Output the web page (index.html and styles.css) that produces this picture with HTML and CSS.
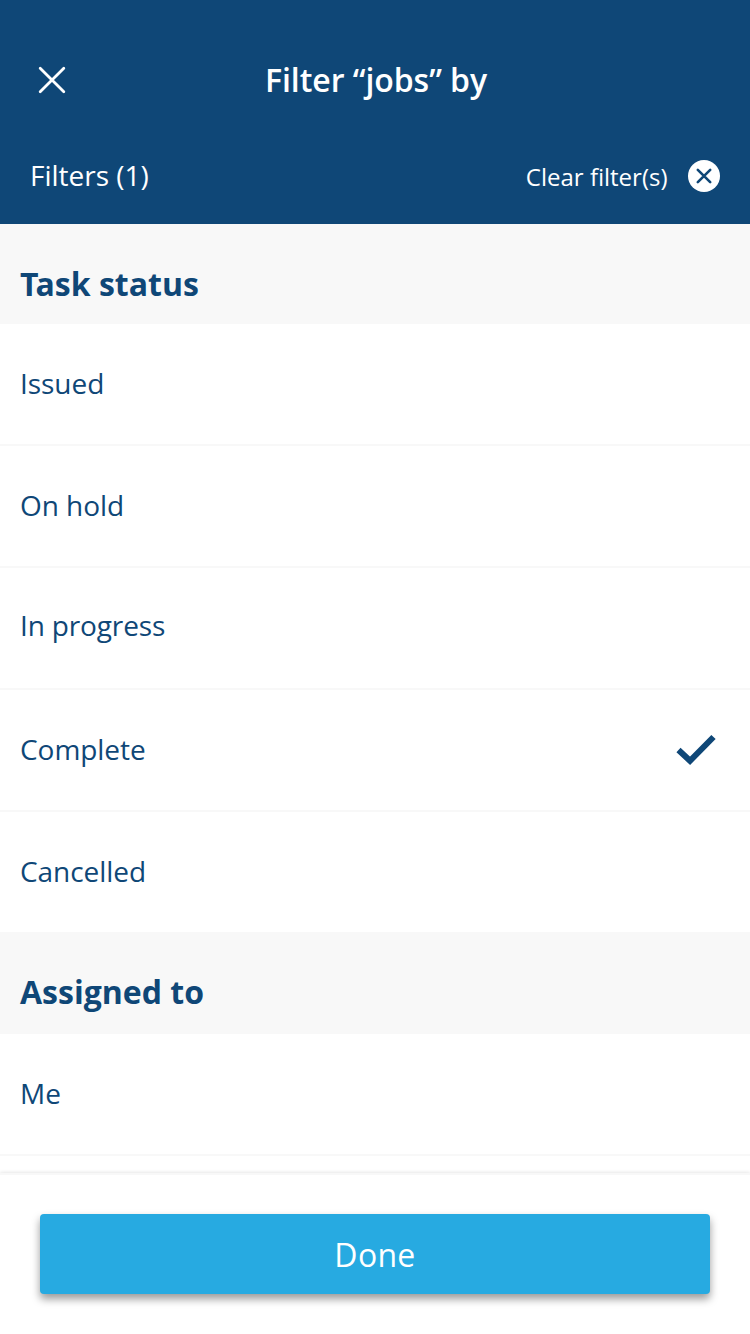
FILE: index.html
```html
<!DOCTYPE html>
<html lang="en">
<head>
<meta charset="utf-8">
<title>Filter jobs</title>
<link rel="stylesheet" href="styles.css">
</head>
<body>
<div class="screen">
  <header class="header">
    <div class="title-bar">
      <svg class="close" viewBox="0 0 28 28"><path d="M2.200 2.200L25.800 25.800M25.800 2.200L2.200 25.800"/></svg>
      <h1 class="title">Filter “jobs” by</h1>
    </div>
    <div class="filter-bar">
      <span class="count">Filters (1)</span>
      <span class="clear">Clear filter(s)</span>
      <svg class="clear-icon" viewBox="0 0 32 32"><circle cx="16" cy="16" r="16"/><path d="M9.800 9.800L22.200 22.200M22.200 9.800L9.800 22.200"/></svg>
    </div>
  </header>
  <main class="list">
    <h2 class="section"><span class="cap">T</span>ask status</h2>
    <div class="row">Issued</div>
    <div class="row">On hold</div>
    <div class="row progress">In progress</div>
    <div class="row">Complete<svg class="check" viewBox="0 0 40 32"><path d="M2.500 16L14 26.800L37.500 3"/></svg></div>
    <div class="row last">Cancelled</div>
    <h2 class="section assigned">Assigned to</h2>
    <div class="row">Me</div>
  </main>
  <footer class="footer"><button class="done">Done</button></footer>
</div>
</body>
</html>
```
FILE: styles.css
```css
* { box-sizing: border-box; }
body { margin: 0; background: #fff; font-family: "Open Sans", sans-serif; color: #0f4777; }
.screen { width: 750px; height: 1334px; display: flex; flex-direction: column; overflow: hidden; }
.header { height: 224px; flex: none; background: #0f4777; color: #fff; }
.title-bar { height: 128px; padding: 32px 38px 0; display: grid; grid-template-columns: 28px 1fr 28px; align-items: center; }
.close { width: 28px; height: 28px; fill: none; stroke: #fff; stroke-width: 2.8; stroke-linecap: round; }
.title { margin: 0; padding-left: 2px; text-align: center; font-size: 32px; line-height: 44px; font-weight: 600; letter-spacing: -.05px; }
.filter-bar { height: 96px; padding: 0 30px; display: flex; align-items: center; }
.count { font-size: 28px; line-height: 38px; margin-right: auto; padding-bottom: 2px; }
.clear { font-size: 24px; line-height: 34px; padding-top: 2px; margin-right: 20.5px; }
.clear-icon { width: 32px; height: 32px; fill: #fff; }
.clear-icon path { stroke: #0f4777; stroke-width: 2.6; stroke-linecap: round; }
.list { flex: 1; min-height: 0; overflow: hidden; }
.section { margin: 0; height: 100px; padding: 38px 20px 0; background: #f8f8f8; font-size: 32px; line-height: 44px; font-weight: 700; }
.cap { letter-spacing: -3px; }
.assigned { height: 102px; }
.row { height: 122px; padding: 0 34px 2px 20px; border-bottom: 2px solid #f8f8f8; display: flex; align-items: center; justify-content: space-between; font-size: 28px; line-height: 38px; letter-spacing: -.05px; }
.progress { padding-bottom: 6px; letter-spacing: -.15px; }
.last { height: 120px; border-bottom: 0; }
.check { width: 40px; height: 32px; margin-bottom: -2px; fill: none; stroke: #0f4777; stroke-width: 6; }
.footer { position: relative; flex: none; height: 161px; padding: 39px 40px 40px; border-top: 2px solid #f8f8f8; background: #fff; box-shadow: 0 0 4px rgba(0,0,0,.15); }
.done { display: block; width: 670px; height: 80px; padding: 1px 0 0; border: 0; border-radius: 4px; background: #27aae1; box-shadow: 0 5px 8px rgba(0,0,0,.4); color: #fff; font: 400 32px/44px "Open Sans", sans-serif; letter-spacing: .3px; }
```
